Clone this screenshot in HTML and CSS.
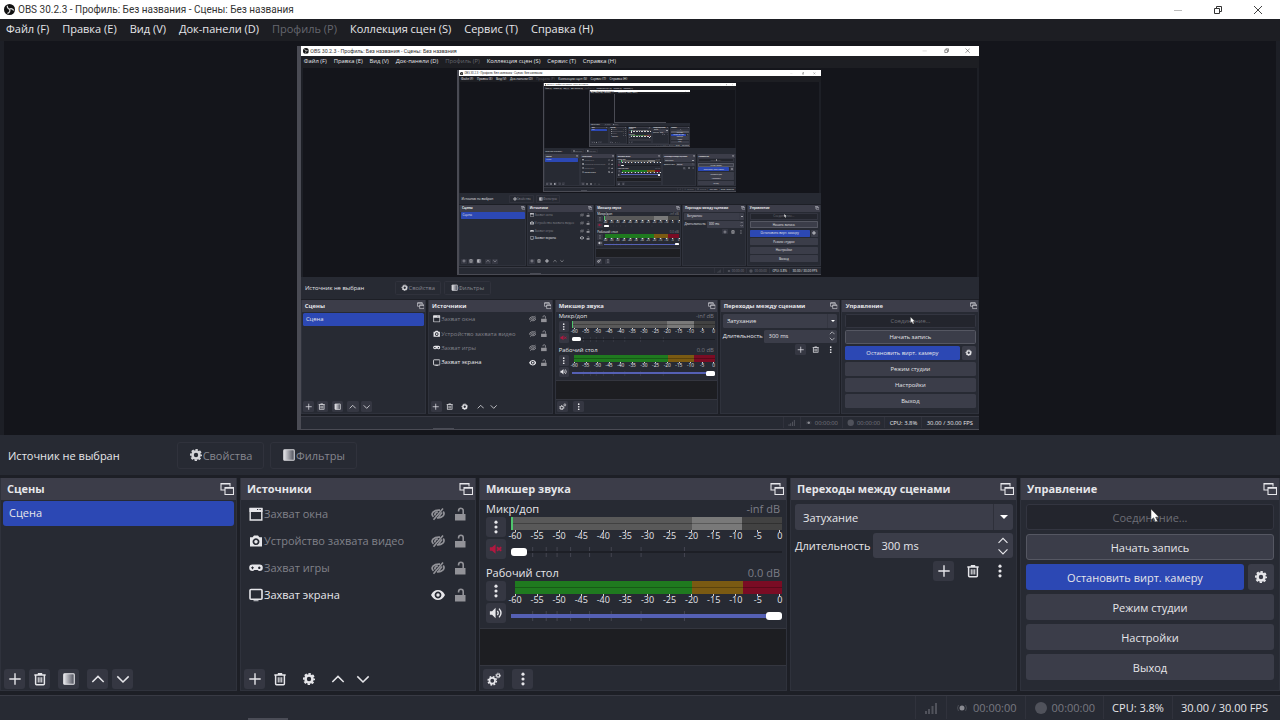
FILE: index.html
```
<!DOCTYPE html>
<html lang="ru">
<head>
    <meta charset="utf-8">
    <title>OBS 30.2.3</title>
    <link rel="stylesheet" href="styles.css">
</head>
<body>
    <svg class="sprite" aria-hidden="true">
        <defs>
            <linearGradient id="fade" x1="0" x2="1">
                <stop offset="0" stop-color="#e8e8ec"/>
                <stop offset="1" stop-color="#4a4c58"/>
            </linearGradient>
        </defs>
        <symbol id="i-obs" viewBox="0 0 16 16">
            <circle cx="8" cy="8" r="8" fill="#111"/>
            <path d="M5 2.5a4 4 0 0 0 3.200 5M14 9.500a4 4 0 0 0-6-2M5 13.500a4 4 0 0 0 3-6" fill="none" stroke="#ddd" stroke-width="1.800"/>
        </symbol>
        <symbol id="i-min" viewBox="0 0 10 10"><path d="M1 5.500h8" stroke="#bbb" fill="none"/></symbol>
        <symbol id="i-restore" viewBox="0 0 10 10"><path d="M1.500 3.500h5v5h-5zM3.500 3V1.500h5v5H7" stroke="#333" fill="none"/></symbol>
        <symbol id="i-close" viewBox="0 0 10 10"><path d="M1 1l8 8M9 1l-8 8" stroke="#444" fill="none"/></symbol>
        <symbol id="i-float" viewBox="0 0 14 14">
            <path d="M10 4.500V1.500h-9v6.500H5M1 2h9" fill="none" stroke="currentColor" stroke-width="1.100"/>
            <path d="M5 5.500h8.500v7H5zM5 6.200h8.500" fill="none" stroke="currentColor" stroke-width="1.100"/>
        </symbol>
        <symbol id="i-plus" viewBox="0 0 16 16"><path d="M8 1.500v13M1.500 8h13" stroke="currentColor" stroke-width="1.600" fill="none"/></symbol>
        <symbol id="i-trash" viewBox="0 0 16 16">
            <path d="M3 4v9.500q0 1 1 1h8q1 0 1-1V4M1.500 3.300h13M5.500 2h5" fill="none" stroke="currentColor" stroke-width="1.700"/>
            <path d="M6 6v6M8 6v6M10 6v6" stroke="currentColor" stroke-width="1.200"/>
        </symbol>
        <symbol id="i-filter" viewBox="0 0 16 16">
            <rect x="2" y="2" width="12" height="12" rx="1" fill="url(#fade)"/>
            <rect x="2" y="2" width="12" height="12" rx="1" fill="none" stroke="currentColor" stroke-width="1.300"/>
        </symbol>
        <symbol id="i-up" viewBox="0 0 16 16"><path d="M1.500 11.500L8 5l6.500 6.500" stroke="currentColor" stroke-width="1.700" fill="none"/></symbol>
        <symbol id="i-down" viewBox="0 0 16 16"><path d="M1.500 5L8 11.500 14.500 5" stroke="currentColor" stroke-width="1.700" fill="none"/></symbol>
        <symbol id="i-gear" viewBox="0 0 16 16">
            <circle cx="8" cy="8" r="4" fill="none" stroke="currentColor" stroke-width="3"/>
            <circle cx="8" cy="8" r="5.900" fill="none" stroke="currentColor" stroke-width="2" stroke-dasharray="2.700 1.934" stroke-dashoffset="1.350"/>
        </symbol>
        <symbol id="i-gears" viewBox="0 0 16 16">
            <circle cx="6" cy="10" r="3.200" fill="none" stroke="currentColor" stroke-width="2"/>
            <circle cx="6" cy="10" r="4.700" fill="none" stroke="currentColor" stroke-width="1.800" stroke-dasharray="2 1.691"/>
            <circle cx="12.700" cy="4" r="1.700" fill="none" stroke="currentColor" stroke-width="1.300"/>
            <circle cx="12.700" cy="4" r="2.700" fill="none" stroke="currentColor" stroke-width="1" stroke-dasharray="1.200 .920"/>
        </symbol>
        <symbol id="i-dots" viewBox="0 0 16 16"><circle cx="8" cy="2.500" r="1.800" fill="currentColor"/><circle cx="8" cy="8" r="1.800" fill="currentColor"/><circle cx="8" cy="13.500" r="1.800" fill="currentColor"/></symbol>
        <symbol id="i-window" viewBox="0 0 14 14"><path d="M1.200 1.500h11.600v11.500H1.200z" fill="none" stroke="currentColor" stroke-width="1.400"/><path d="M.5 1h13v4H.5z" fill="currentColor"/><path d="M8 2.500h1.200M10.500 2.500h1.200" stroke="#272a33"/></symbol>
        <symbol id="i-camera" viewBox="0 0 14 14"><path fill-rule="evenodd" d="M1 3.200h2.600L5 1.500h4l1.400 1.700H13V12.500H1zM7 4.300a3.400 3.400 0 1 0 .01 0zM7 6a1.700 1.700 0 1 1-.01 0z" fill="currentColor"/></symbol>
        <symbol id="i-game" viewBox="0 0 14 14"><path fill-rule="evenodd" d="M3.500 3.500h7a3.300 3.300 0 0 1 0 6.600Q9.500 10 8.600 9H5.400q-.9 1-1.900 1.100a3.300 3.300 0 0 1 0-6.600zM3 5.500v.8h-.9v1H3v.9h1v-.9h.9v-1H4v-.8zM10.300 5.600a1.200 1.200 0 1 0 .01 0z" fill="currentColor"/></symbol>
        <symbol id="i-screen" viewBox="0 0 14 14"><rect x="1" y="1.500" width="12" height="9.800" rx="1" fill="none" stroke="currentColor" stroke-width="1.600"/><path d="M4.500 11.500h5v1.800h-5z" fill="currentColor" opacity=".7"/></symbol>
        <symbol id="i-eye" viewBox="0 0 14 14"><path fill-rule="evenodd" d="M0 7Q2.500 2 7 2t7 5Q11.500 12 7 12T0 7zM7 3.600a3.400 3.400 0 1 0 .01 0z" fill="currentColor"/><circle cx="7" cy="7" r="1.700" fill="currentColor"/></symbol>
        <symbol id="i-hidden" viewBox="0 0 14 14"><path d="M2.500 9.800Q0 7.500 2 5.200 4.500 2.800 9 3.200M12.200 4.500Q14 7 11.800 9.200 9.500 11.200 6 10.800M3.800 8.500Q3.600 5.500 6.800 5" fill="none" stroke="currentColor" stroke-width="1.700"/><path d="M2.500 12.800L12 1.500M7.500 10l3.500-4.500" stroke="currentColor" stroke-width="1.600"/></symbol>
        <symbol id="i-lock" viewBox="0 0 14 14"><path d="M2 7h10.500v6.500H2z" fill="currentColor"/><path d="M10.200 7V3.600a2.300 2.300 0 0 0-4.600 0v.8" fill="none" stroke="currentColor" stroke-width="1.600"/></symbol>
        <symbol id="i-muted" viewBox="0 0 16 16"><path d="M1 6h2.500l4-3.500v11L3.500 10H1z" fill="currentColor"/><path d="M9 6l5 4M14 6l-5 4" stroke="currentColor" stroke-width="2"/></symbol>
        <symbol id="i-sound" viewBox="0 0 16 16"><path d="M1 6h2.500l4-4v12l-4-4H1z" fill="currentColor"/><path d="M9.500 5.500q2 2.500 0 5M11.500 3q4.400 5 0 10" stroke="currentColor" stroke-width="1.600" fill="none"/></symbol>
        <symbol id="i-signal" viewBox="0 0 14 14"><path d="M2 10v3M5 8v5M8.500 5v8M12 2v11" stroke="currentColor" stroke-width="2"/></symbol>
        <symbol id="i-stream" viewBox="0 0 14 14"><circle cx="7" cy="7" r="2.500" fill="#8a8b92"/><path d="M3.500 4Q1.500 7 3.500 10M10.500 4q2 3 0 6" stroke="currentColor" fill="none" opacity=".8"/></symbol>
        <symbol id="i-record" viewBox="0 0 14 14"><circle cx="7" cy="7" r="6" fill="currentColor"/></symbol>
        <symbol id="i-cursor" viewBox="0 0 10 14"><path d="M1 0v11l2.600-2.200L5.500 13l2-1-1.900-3.800H9z" fill="#fff" stroke="#333" stroke-width=".5"/></symbol>
    </svg>

    <div class="window" id="main">
        <header class="titlebar">
            <svg class="logo"><use href="#i-obs"/></svg>
            <span class="title">OBS 30.2.3 - Профиль: Без названия - Сцены: Без названия</span>
            <button aria-label="Свернуть"><svg><use href="#i-min"/></svg></button>
            <button aria-label="Восстановить"><svg><use href="#i-restore"/></svg></button>
            <button aria-label="Закрыть"><svg><use href="#i-close"/></svg></button>
        </header>

        <nav class="menu">
            <button>Файл (F)</button>
            <button>Правка (E)</button>
            <button>Вид (V)</button>
            <button>Док-панели (D)</button>
            <button disabled>Профиль (P)</button>
            <button>Коллекция сцен (S)</button>
            <button>Сервис (T)</button>
            <button>Справка (H)</button>
        </nav>

        <div class="preview"><div class="capture"></div></div>

        <div class="context">
            <span class="context-name">Источник не выбран</span>
            <button disabled><svg><use href="#i-gear"/></svg>Свойства</button>
            <button disabled><svg><use href="#i-filter"/></svg>Фильтры</button>
        </div>

        <main class="docks">
            <section class="dock">
                <h2>Сцены<svg><use href="#i-float"/></svg></h2>
                <ul class="scenes">
                    <li class="selected">Сцена</li>
                </ul>
                <div class="tools raised">
                    <button aria-label="Добавить"><svg><use href="#i-plus"/></svg></button>
                    <button aria-label="Удалить"><svg><use href="#i-trash"/></svg></button>
                    <button class="apart" aria-label="Фильтры сцены"><svg><use href="#i-filter"/></svg></button>
                    <button class="apart" aria-label="Вверх"><svg><use href="#i-up"/></svg></button>
                    <button aria-label="Вниз"><svg><use href="#i-down"/></svg></button>
                </div>
            </section>

            <section class="dock">
                <h2>Источники<svg><use href="#i-float"/></svg></h2>
                <ul class="sources">
                    <li class="off"><svg><use href="#i-window"/></svg><span>Захват окна</span><svg><use href="#i-hidden"/></svg><svg class="lock"><use href="#i-lock"/></svg></li>
                    <li class="off"><svg><use href="#i-camera"/></svg><span>Устройство захвата видео</span><svg><use href="#i-hidden"/></svg><svg class="lock"><use href="#i-lock"/></svg></li>
                    <li class="off"><svg><use href="#i-game"/></svg><span>Захват игры</span><svg><use href="#i-hidden"/></svg><svg class="lock"><use href="#i-lock"/></svg></li>
                    <li><svg><use href="#i-screen"/></svg><span>Захват экрана</span><svg><use href="#i-eye"/></svg><svg class="lock"><use href="#i-lock"/></svg></li>
                </ul>
                <div class="tools">
                    <button class="lit" aria-label="Добавить"><svg><use href="#i-plus"/></svg></button>
                    <button aria-label="Удалить"><svg><use href="#i-trash"/></svg></button>
                    <button class="apart" aria-label="Свойства"><svg><use href="#i-gear"/></svg></button>
                    <button class="apart" aria-label="Вверх"><svg><use href="#i-up"/></svg></button>
                    <button aria-label="Вниз"><svg><use href="#i-down"/></svg></button>
                </div>
            </section>

            <section class="dock mixer">
                <h2>Микшер звука<svg><use href="#i-float"/></svg></h2>
                <div class="track muted">
                    <div class="track-name"><span>Микр/доп</span><span class="db">-inf dB</span></div>
                    <button aria-label="Меню"><svg><use href="#i-dots"/></svg></button>
                    <div class="level">
                        <div class="meter"><i class="low"></i><i class="mid"></i><i class="high"></i></div>
                        <div class="scale"></div>
                    </div>
                    <button class="mute" aria-label="Включить звук"><svg><use href="#i-muted"/></svg></button>
                    <div class="fader"><input type="range" min="0" max="100" value="0" aria-label="Громкость Микр/доп"></div>
                </div>
                <div class="track">
                    <div class="track-name"><span>Рабочий стол</span><span class="db">0.0 dB</span></div>
                    <button aria-label="Меню"><svg><use href="#i-dots"/></svg></button>
                    <div class="level">
                        <div class="meter"><i class="low"></i><i class="mid"></i><i class="high"></i></div>
                        <div class="scale"></div>
                    </div>
                    <button class="mute" aria-label="Выключить звук"><svg><use href="#i-sound"/></svg></button>
                    <div class="fader"><input type="range" min="0" max="100" value="100" aria-label="Громкость Рабочий стол"></div>
                </div>
                <div class="mixer-empty"></div>
                <div class="tools raised">
                    <button aria-label="Свойства аудио"><svg><use href="#i-gears"/></svg></button>
                    <button class="apart" aria-label="Меню"><svg><use href="#i-dots"/></svg></button>
                </div>
            </section>

            <section class="dock">
                <h2>Переходы между сценами<svg><use href="#i-float"/></svg></h2>
                <div class="transitions">
                    <div class="combo">
                        <select aria-label="Переход"><option>Затухание</option></select>
                    </div>
                    <label class="duration">Длительность
                        <span class="spin">
                            <input type="text" value="300 ms">
                            <span class="arrows"><svg><use href="#i-up"/></svg><svg><use href="#i-down"/></svg></span>
                        </span>
                    </label>
                    <div class="tools">
                        <button class="lit" aria-label="Добавить"><svg><use href="#i-plus"/></svg></button>
                        <button aria-label="Удалить"><svg><use href="#i-trash"/></svg></button>
                        <button aria-label="Меню"><svg><use href="#i-dots"/></svg></button>
                    </div>
                </div>
            </section>

            <section class="dock">
                <h2>Управление<svg><use href="#i-float"/></svg></h2>
                <div class="controls">
                    <button disabled>Соединение...</button>
                    <button class="hover">Начать запись</button>
                    <div class="pair">
                        <button class="active">Остановить вирт. камеру</button>
                        <button class="config" aria-label="Настройки камеры"><svg><use href="#i-gear"/></svg></button>
                    </div>
                    <button>Режим студии</button>
                    <button>Настройки</button>
                    <button>Выход</button>
                    <svg class="cursor"><use href="#i-cursor"/></svg>
                </div>
            </section>
        </main>

        <footer class="status">
            <span class="dim"><svg><use href="#i-signal"/></svg></span>
            <span class="dim"><svg><use href="#i-stream"/></svg>00:00:00</span>
            <span class="dim"><svg><use href="#i-record"/></svg>00:00:00</span>
            <span>CPU: 3.8%</span>
            <span>30.00 / 30.00 FPS</span>
        </footer>
    </div>

    <script src="script.js"></script>
</body>
</html>
```
FILE: styles.css
```
* {
    box-sizing: border-box;
}
html, body {
    height: 100%;
    margin: 0;
    overflow: hidden;
}
body {
    font-family: "Open Sans", "Noto Sans", sans-serif;
    font-size: 11px;
    color: #e6e6ea;
    background: #1d1f26;
}
button, input, select {
    font: inherit;
    color: inherit;
    margin: 0;
    padding: 0;
    border: none;
    background: none;
}
ul {
    list-style: none;
    margin: 0;
    padding: 0;
}
svg {
    display: block;
    flex: none;
    width: 14px;
    height: 14px;
}
.sprite {
    position: absolute;
    width: 0;
    height: 0;
}

.window {
    display: flex;
    flex-direction: column;
    width: 100%;
    height: 100%;
    background: #1d1f26;
}

/* title bar and menu */
.titlebar {
    display: flex;
    align-items: center;
    flex: none;
    height: 19px;
    padding: 0 12px 0 4px;
    background: #fff;
    color: #333;
    font-family: Roboto, sans-serif;
    font-size: 10px;
}
.titlebar .logo {
    width: 11px;
    height: 11px;
    margin-right: 3px;
}
.title {
    flex: 1;
    white-space: nowrap;
}
.titlebar button {
    width: 20px;
    margin-left: 20px;
}
.titlebar button svg {
    width: 10px;
    height: 10px;
    margin: 0 auto;
}
.menu {
    display: flex;
    flex: none;
    gap: 13px;
    height: 22px;
    padding: 0 0 3px 6px;
    background: #1d1e23;
}
.menu button {
    white-space: nowrap;
}
.menu button:disabled {
    color: #66676f;
}

/* preview, holds a copy of the whole window */
.preview {
    display: flex;
    justify-content: center;
    flex: 1;
    min-height: 0;
    padding: 5px 4px 5px 0;
    margin: 0 4px;
    background: #14151b;
}
.capture {
    height: 100%;
    aspect-ratio: 16 / 9;
    overflow: hidden;
    background: #14151b;
    border-left: 4px solid #4a4b54;
    border-bottom: 1px solid #4a4b54;
}
.capture .window {
    zoom: 0.532;
}

.context {
    display: flex;
    align-items: center;
    flex: none;
    gap: 6px;
    height: 40px;
    padding-left: 8px;
    background: #272a33;
}
.context-name {
    width: 163px;
    white-space: nowrap;
}
.context button {
    display: flex;
    align-items: center;
    justify-content: center;
    width: 87px;
    height: 27px;
    border: 1px solid #30323c;
    border-radius: 3px;
    color: #85868e;
}
.context svg {
    color: #d4d4d8;
}

/* docks */
.docks {
    display: grid;
    grid-template-columns: 237fr 236fr 308fr 227fr 260fr;
    gap: 3px;
    flex: none;
    height: 217px;
    padding: 3px 0 1px;
}
.dock {
    display: flex;
    flex-direction: column;
    min-width: 0;
    background: #272a33;
    border: 1px solid #2f323c;
    border-top: none;
}
.dock h2 {
    display: flex;
    align-items: center;
    justify-content: space-between;
    flex: none;
    height: 22px;
    margin: 0;
    padding: 0 2px 1px 6px;
    background: #3c3d49;
    font-size: 11px;
    font-weight: 700;
    white-space: nowrap;
}
.scenes {
    flex: 1;
    padding: 1px 2px;
}
.selected {
    height: 25px;
    padding-left: 6px;
    line-height: 24px;
    background: #2c48b4;
    border-radius: 3px;
}
.sources {
    flex: 1;
    padding: 0 8px;
}
.sources li {
    display: flex;
    align-items: center;
    height: 27px;
    white-space: nowrap;
}
.sources span {
    flex: 1;
    padding-left: 1px;
}
.sources .off span {
    color: #808189;
}
.sources .off svg:nth-of-type(2), .sources .lock {
    color: #929298;
}
.sources .lock {
    margin-left: 8px;
}
.tools {
    display: flex;
    flex: none;
    gap: 4px;
    height: 24px;
    padding: 3px 3px 1px;
}
.tools button {
    display: grid;
    place-items: center;
    width: 21px;
    height: 20px;
    border-radius: 3px;
}
.tools .apart {
    margin-left: 4px;
}
.raised button, .tools .lit {
    background: #353742;
}

/* mixer */
.track {
    display: grid;
    grid-template-columns: 20px 1fr;
    grid-template-rows: 17px 22px 20px;
    column-gap: 5px;
    flex: none;
    height: 64px;
    padding: 0 4px 0 6px;
}
.track-name {
    grid-column: 1 / 3;
    display: flex;
    justify-content: space-between;
    line-height: 17px;
    padding-right: 2px;
}
.db {
    color: #7c7d86;
}
.track > button {
    display: grid;
    place-items: center;
    height: 20px;
    border-radius: 3px;
    background: #353742;
}
.muted .mute {
    color: #b01840;
}
.meter {
    display: flex;
    height: 13px;
    margin-left: 4px;
}
.low { flex: 176; background: #1f7a1f; }
.mid { flex: 50; background: #7a5a12; }
.high { flex: 39; background: #7a0c24; }
.meter i {
    background-image: linear-gradient(transparent 6px, #0004 6px, #0004 7px, transparent 7px);
}
.muted .meter {
    margin-left: 0;
    border-left: 2px solid #4fc56c;
}
.muted .low { background-color: #595959; }
.muted .mid { background-color: #797979; }
.muted .high { background-color: #424242; }
.scale {
    display: flex;
    justify-content: space-between;
    margin: 0 2px 0 4px;
    font-size: 9px;
    line-height: 8px;
}
.scale span {
    display: flex;
    flex-direction: column;
    align-items: center;
    width: 0;
}
.scale span::before {
    content: "";
    flex: none;
    width: 1px;
    height: 2px;
    background: #d0d0d4;
}
.fader {
    display: grid;
    align-items: center;
    height: 20px;
    padding-top: 5px;
}
.fader svg {
    grid-area: 1 / 1;
    width: 100%;
    height: 10px;
    color: #444651;
}
.fader input {
    grid-area: 1 / 1;
    -webkit-appearance: none;
    appearance: none;
    width: 100%;
    height: 8px;
    background: linear-gradient(transparent 2px, #5560b4 2px, #5560b4 6px, transparent 6px);
}
.muted .fader input {
    background: linear-gradient(transparent 3px, #1d1f26 3px, #1d1f26 5px, transparent 5px);
}
.fader input::-webkit-slider-thumb {
    -webkit-appearance: none;
    width: 16px;
    height: 8px;
    border-radius: 3px;
    background: #fff;
}
.mixer-empty {
    flex: 1;
    background: #1d1e22;
    border: solid #34363f;
    border-width: 1px 0;
}

/* transitions */
.transitions {
    padding: 4px 3px 4px 4px;
}
.combo {
    position: relative;
}
.combo::after {
    content: "";
    position: absolute;
    top: 11px;
    right: 5px;
    border: 4px solid transparent;
    border-top-color: #fff;
    border-bottom: none;
}
.combo select {
    display: block;
    appearance: none;
    width: 100%;
    height: 26px;
    padding-left: 8px;
    border-radius: 3px;
    background: linear-gradient(#2e303a, #2e303a) right 19px top / 1px 100% no-repeat #3b3d49;
}
.duration {
    display: flex;
    align-items: center;
    gap: 3px;
    margin-top: 3px;
}
.spin {
    display: flex;
    flex: 1;
    align-items: center;
    height: 25px;
    padding: 0 4px 0 8px;
    border-radius: 3px;
    background: #3b3d49;
}
.spin input {
    flex: 1;
    width: 0;
}
.arrows svg {
    width: 12px;
    height: 11px;
}
.transitions .tools {
    justify-content: flex-end;
    gap: 8px;
    padding: 3px 4px 1px;
}
.transitions .tools button:last-child {
    width: 18px;
}

/* controls */
.controls {
    position: relative;
    display: flex;
    flex-direction: column;
    gap: 4px;
    padding: 4px 5px;
}
.controls button {
    height: 26px;
    border-radius: 3px;
    background: #3b3d49;
}
.controls button:disabled {
    background: #23252d;
    border: 1px solid #333540;
    color: #6d6e76;
}
.controls .hover {
    border: 1px solid #555762;
}
.pair {
    display: flex;
    gap: 4px;
}
.controls .active {
    flex: 1;
    background: #2c48b4;
}
.controls .config {
    display: grid;
    place-items: center;
    width: 26px;
}
.cursor {
    position: absolute;
    top: 9px;
    left: 50%;
    width: 10px;
}

.status {
    position: relative;
    display: flex;
    justify-content: flex-end;
    flex: none;
    height: 25px;
    margin-top: 3px;
    padding: 0 4px 1px 0;
    background: #272a33;
    border-top: 1px solid #383a44;
}
.status::after {
    content: "";
    position: absolute;
    left: 248px;
    bottom: 0;
    width: 40px;
    height: 2px;
    background: #4a4c56;
}
.status span {
    display: flex;
    align-items: center;
    gap: 4px;
    padding: 0 8px;
    border-left: 1px solid #30323c;
    white-space: nowrap;
}
.status .dim {
    color: #777880;
}
.status .dim svg {
    color: #50525b;
}
```
FILE: script.js
```
const main = document.getElementById('main');

// dB labels under the meters
document.querySelectorAll('.scale').forEach((scale) => {
    for (let db = -60; db <= 0; db += 5) {
        const mark = document.createElement('span');
        mark.textContent = db;
        scale.appendChild(mark);
    }
});

// fader ticks, in percent of the track
const ticks = [8, 13, 17, 22, 29, 37, 48, 64];
document.querySelectorAll('.fader').forEach((fader) => {
    const lines = ticks.map((x) => `<line x1="${x}%" x2="${x}%" y1="0" y2="10" stroke="currentColor"/>`);
    fader.insertAdjacentHTML('afterbegin', `<svg>${lines.join('')}</svg>`);
});

// the captured screen shows the window itself, over and over
const source = main.cloneNode(true);
source.removeAttribute('id');
source.setAttribute('inert', '');

let target = main.querySelector('.capture');
for (let depth = 0; depth < 4; depth++) {
    const copy = source.cloneNode(true);
    target.appendChild(copy);
    target = copy.querySelector('.capture');
}
```
